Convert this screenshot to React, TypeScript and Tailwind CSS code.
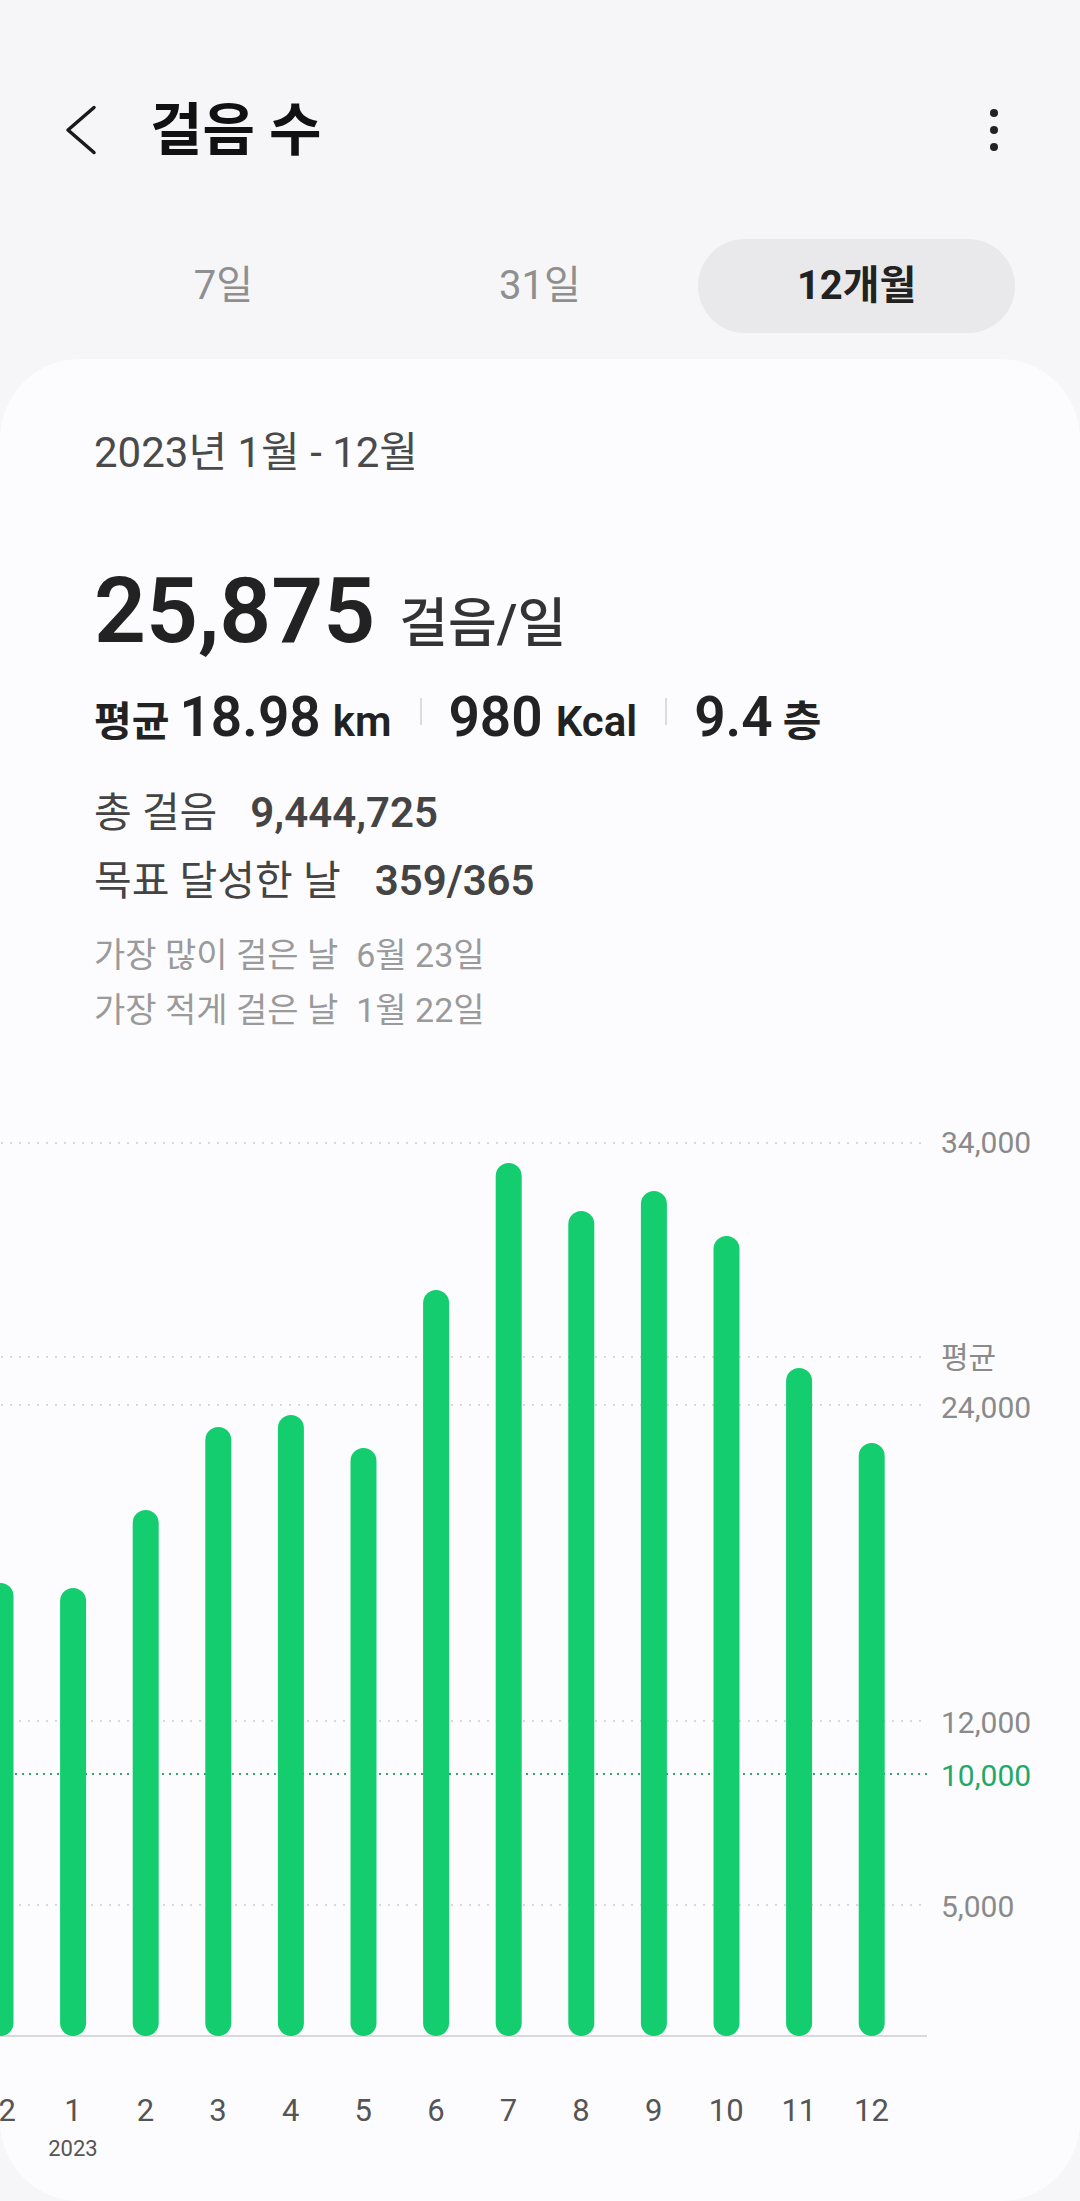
import React from "react";

const tops = [1583, 1588, 1510, 1427, 1415, 1448, 1290, 1163, 1211, 1191, 1236, 1368, 1443];
const months = ["2", "1", "2", "3", "4", "5", "6", "7", "8", "9", "10", "11", "12"];
const PITCH = 72.6;
const CHART_TOP = 1100;
const BASE = 2036;

function Chart() {
  const grayLines = [1143, 1357, 1405, 1721, 1905];
  return (
    <div className="relative mt-[73px] h-[938px] w-full">
      <svg className="absolute left-0 top-0" width={1080} height={938} viewBox="0 0 1080 938">
        {grayLines.map((y) => (
          <line
            key={y}
            x1={1}
            x2={927}
            y1={y - CHART_TOP}
            y2={y - CHART_TOP}
            stroke="#d8d8da"
            strokeWidth={2}
            strokeDasharray="2 7"
          />
        ))}
        <line
          x1={1}
          x2={927}
          y1={1774 - CHART_TOP}
          y2={1774 - CHART_TOP}
          stroke="#3a9f69"
          strokeWidth={2}
          strokeDasharray="2 5"
        />
        <line x1={0} x2={927} y1={BASE - CHART_TOP} y2={BASE - CHART_TOP} stroke="#d9d9db" strokeWidth={2} />
        {tops.map((t, i) => {
          const cx = 0.5 + PITCH * i;
          return (
            <rect
              key={i}
              x={cx - 13}
              y={t - CHART_TOP}
              width={26}
              height={BASE - t}
              rx={13}
              fill="#13cd6f"
            />
          );
        })}
      </svg>
      <div className="absolute left-[941px] top-[23px] h-[40px] text-[30px] leading-[40px] text-[#8a8a8a]">34,000</div>
      <div className="absolute left-[941px] top-[238px] h-[40px] text-[30px] leading-[40px] text-[#8a8a8a]">평균</div>
      <div className="absolute left-[941px] top-[288px] h-[40px] text-[30px] leading-[40px] text-[#8a8a8a]">24,000</div>
      <div className="absolute left-[941px] top-[603px] h-[40px] text-[30px] leading-[40px] text-[#8a8a8a]">12,000</div>
      <div className="absolute left-[941px] top-[656px] h-[40px] text-[30px] leading-[40px] text-[#22a867]">10,000</div>
      <div className="absolute left-[941px] top-[787px] h-[40px] text-[30px] leading-[40px] text-[#8a8a8a]">5,000</div>
    </div>
  );
}

export default function App() {
  return (
    <div className="flex h-[2201px] w-[1080px] flex-col overflow-hidden bg-[#f6f6f8] font-['Roboto','Noto_Sans_CJK_KR',sans-serif]">
      {/* Header */}
      <div className="mt-[85px] flex h-[90px] items-center">
        <svg className="ml-[64px]" width={34} height={50} viewBox="0 0 34 50">
          <polyline
            points="30,2.5 4,25 30,47.5"
            fill="none"
            stroke="#1a1a1a"
            strokeWidth={3.5}
            strokeLinecap="round"
            strokeLinejoin="round"
          />
        </svg>
        <div className="ml-[52px] text-[57px] font-bold leading-[57px] text-[#111]">걸음 수</div>
        <svg className="ml-auto mr-[81px]" width={10} height={44} viewBox="0 0 10 44">
          <circle cx={5} cy={5} r={4} fill="#222" />
          <circle cx={5} cy={22} r={4} fill="#222" />
          <circle cx={5} cy={39} r={4} fill="#222" />
        </svg>
      </div>

      {/* Tabs */}
      <div className="mx-[65px] mt-[64px] grid h-[94px] grid-cols-3">
        <div className="flex items-center justify-center text-[40px] leading-[40px] text-[#8f8f8f]">7일</div>
        <div className="flex items-center justify-center text-[40px] leading-[40px] text-[#8f8f8f]">31일</div>
        <div className="flex items-center justify-center rounded-full bg-[#e9e9eb] text-[40px] font-bold leading-[40px] text-[#222]">
          12개월
        </div>
      </div>

      {/* Card */}
      <div className="mt-[26px] flex min-h-0 flex-1 flex-col overflow-hidden rounded-[80px] bg-[#fcfcfe]">
        <div className="px-[94px]">
          <div className="mt-[73px] h-[42px] text-[42px] leading-[42px] text-[#4a4a4a]">2023년 1월 - 12월</div>

          <div className="mt-[91px] flex items-baseline">
            <span className="text-[91px] font-semibold leading-[93px] text-[#222]">25,875</span>
            <span className="ml-[24px] text-[53px] font-medium leading-[53px] text-[#333]">걸음/일</span>
          </div>

          <div className="mt-[32px] flex items-baseline text-[#222]">
            <span className="text-[41px] font-bold leading-[41px]">평균</span>
            <span className="ml-[10px] text-[55px] font-semibold leading-[54px]">18.98</span>
            <span className="ml-[12px] text-[42px] font-semibold leading-[42px]">km</span>
            <span className="ml-[29px] mt-[8px] h-[27px] w-[2px] self-start bg-[#dcdcde]" />
            <span className="ml-[26px] text-[55px] font-semibold leading-[54px]">980</span>
            <span className="ml-[13px] text-[42px] font-semibold leading-[42px]">Kcal</span>
            <span className="ml-[28px] mt-[8px] h-[27px] w-[2px] self-start bg-[#dcdcde]" />
            <span className="ml-[27px] text-[55px] font-semibold leading-[54px]">9.4</span>
            <span className="ml-[10px] text-[42px] font-bold leading-[42px]">층</span>
          </div>

          <div className="mt-[48px] flex items-baseline text-[#444]">
            <span className="text-[41px] leading-[41px]">총 걸음</span>
            <span className="ml-[33px] text-[42px] font-semibold leading-[42px]">9,444,725</span>
          </div>

          <div className="mt-[26px] flex items-baseline text-[#444]">
            <span className="text-[41px] leading-[41px]">목표 달성한 날</span>
            <span className="ml-[34px] text-[42px] font-semibold leading-[42px]">359/365</span>
          </div>

          <div className="mt-[36px] flex h-[34px] items-baseline text-[34px] leading-[34px] text-[#9a9a9a]">
            <span>가장 많이 걸은 날</span>
            <span className="ml-[18px]">6월 23일</span>
          </div>
          <div className="mt-[21px] flex h-[34px] items-baseline text-[34px] leading-[34px] text-[#9a9a9a]">
            <span>가장 적게 걸은 날</span>
            <span className="ml-[18px]">1월 22일</span>
          </div>
        </div>

        <Chart />

        <div className="ml-[-36px] mt-[53px] flex h-[40px] text-[31px] leading-[40px] text-[#555]">
          {months.map((m, i) => (
            <div key={i} className={i === 0 ? "w-[72.6px] shrink-0 pl-[14px] text-center" : "w-[72.6px] shrink-0 text-center"}>
              {m}
            </div>
          ))}
        </div>
        <div className="ml-[36.7px] mt-[6px] h-[24px] w-[72.6px] text-center text-[22px] leading-[24px] text-[#555]">2023</div>
      </div>
    </div>
  );
}
